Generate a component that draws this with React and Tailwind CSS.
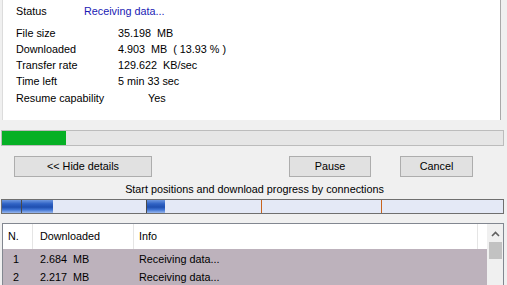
import React from 'react';

const rows = [
    { label: 'File size', value: '35.198  MB' },
    { label: 'Downloaded', value: '4.903  MB  ( 13.93 % )' },
    { label: 'Transfer rate', value: '129.622  KB/sec' },
    { label: 'Time left', value: '5 min 33 sec' },
];

const connections = [
    { n: 1, size: '2.684  MB', info: 'Receiving data...' },
    { n: 2, size: '2.217  MB', info: 'Receiving data...' },
];

const Button = ({ children, className }) => (
    <button
        type="button"
        className={`h-[21px] bg-[#e1e1e1] border border-[#adadad] text-[10.8px] text-black ${className}`}
    >
        {children}
    </button>
);

const Segment = ({ className }) => (
    <div
        className={`h-full bg-[linear-gradient(to_bottom,#6d97e0_0%,#2f62c4_30%,#1f4fb0_55%,#3f74d4_75%,#9ab8ec_100%)] ${className}`}
    />
);

const App = () => {
    return (
        <div
            className="w-[507px] h-[285px] overflow-hidden bg-[#f0f0f0] text-[10.8px] text-black"
            style={{ fontFamily: 'Tahoma, "Liberation Sans", Arial, sans-serif' }}
        >
            {/* details panel */}
            <div className="ml-[2px] w-[499px] h-[120px] bg-white border-l border-[#dcdcdc] border-r border-r-[#a9a9a9] pt-[3px] pl-[13px]">
                <div className="flex h-[16px] items-center">
                    <span className="w-[68px]">Status</span>
                    <span className="text-[#1a1ab4]">Receiving data...</span>
                </div>
                <div className="mt-[6px]">
                    {rows.map((r) => (
                        <div key={r.label} className="flex h-[16px] items-center">
                            <span className="w-[102px]">{r.label}</span>
                            <span className="whitespace-pre">{r.value}</span>
                        </div>
                    ))}
                    <div className="flex h-[18px] items-center">
                        <span className="w-[132px]">Resume capability</span>
                        <span>Yes</span>
                    </div>
                </div>
            </div>

            {/* overall progress */}
            <div className="mt-[10px] ml-[1px] w-[503px] h-[16px] bg-[#e6e6e6] border border-[#bcbcbc]">
                <div className="w-[64px] h-full bg-[#06b025]" />
            </div>

            {/* buttons */}
            <div className="mt-[10px] flex h-[21px]">
                <Button className="ml-[14px] w-[138px]">&lt;&lt; Hide details</Button>
                <Button className="ml-[137px] w-[82px]">Pause</Button>
                <Button className="ml-[29px] w-[73px]">Cancel</Button>
            </div>

            <div className="mt-[4px] h-[16px] flex items-center justify-center pl-[2px]">
                Start positions and download progress by connections
            </div>

            {/* connections bar */}
            <div className="mt-[2px] ml-[1px] w-[503px] h-[15px] border border-[#6f6f6f] bg-[#e4e9f6] flex">
                <Segment className="w-[19px]" />
                <div className="w-px h-full bg-[#4a4a4a]" />
                <Segment className="w-[31px]" />
                <div className="w-[93px]" />
                <div className="w-px h-full bg-[#4a4a4a]" />
                <Segment className="w-[18px]" />
                <div className="w-[96px]" />
                <div className="w-px h-full bg-[#c8641e]" />
                <div className="w-[119px]" />
                <div className="w-px h-full bg-[#c8641e]" />
            </div>

            {/* connection list */}
            <div className="mt-[9px] ml-[2px] w-[502px] h-[70px] border border-[#828790] bg-white flex">
                <div className="flex-1 flex flex-col">
                    <div className="h-[25px] flex items-center bg-white">
                        <div className="w-[30px] pl-[5px] border-r border-[#e5e5e5] h-full flex items-center">N.</div>
                        <div className="w-[101px] pl-[7px] border-r border-[#e5e5e5] h-full flex items-center">Downloaded</div>
                        <div className="w-[344px] pl-[5px] border-r border-[#e5e5e5] h-full flex items-center">Info</div>
                    </div>
                    <div className="flex-1 bg-[#bdb2bc] pt-[1px]">
                        {connections.map((c) => (
                            <div key={c.n} className="flex h-[18px] items-center">
                                <span className="w-[30px] pl-[10px]">{c.n}</span>
                                <span className="w-[101px] pl-[7px] whitespace-pre">{c.size}</span>
                                <span className="pl-[5px]">{c.info}</span>
                            </div>
                        ))}
                    </div>
                </div>
                {/* scrollbar */}
                <div className="w-[16px] bg-[#f0f0f0] flex flex-col items-center">
                    <svg width="9" height="6" viewBox="0 0 9 6" className="mt-[7px]">
                        <path d="M1 5 L4.5 1.5 L8 5" fill="none" stroke="#606060" strokeWidth="1.6" />
                    </svg>
                    <div className="mt-[5px] w-[13px] h-[17px] bg-[#c2c2c2]" />
                </div>
            </div>
        </div>
    );
};

export default App;
